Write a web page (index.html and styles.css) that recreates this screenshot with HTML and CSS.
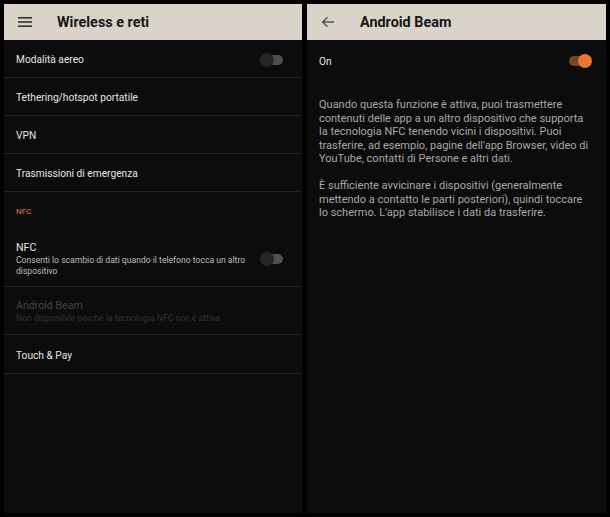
FILE: index.html
```html
<!DOCTYPE html>
<html lang="it">
<head>
<meta charset="utf-8">
<link rel="stylesheet" href="styles.css">
</head>
<body>
<div class="screens">
  <section class="panel">
    <header class="appbar">
      <svg class="icon" width="14" height="10" viewBox="0 0 14 10"><rect x="0" y="0" width="14" height="1.6" fill="#333"/><rect x="0" y="4.2" width="14" height="1.6" fill="#333"/><rect x="0" y="8.4" width="14" height="1.6" fill="#333"/></svg>
      <h1 class="title">Wireless e reti</h1>
    </header>
    <div class="row">
      <span class="label">Modalità aereo</span>
      <span class="toggle"><span class="thumb"></span></span>
    </div>
    <div class="row"><span class="label">Tethering/hotspot portatile</span></div>
    <div class="row"><span class="label">VPN</span></div>
    <div class="row"><span class="label">Trasmissioni di emergenza</span></div>
    <div class="section">NFC</div>
    <div class="row tall">
      <div class="texts">
        <span class="label">NFC</span>
        <span class="sub">Consenti lo scambio di dati quando il telefono tocca un altro dispositivo</span>
      </div>
      <span class="toggle"><span class="thumb"></span></span>
    </div>
    <div class="row mid disabled">
      <div class="texts">
        <span class="label">Android Beam</span>
        <span class="sub">Non disponibile perché la tecnologia NFC non è attiva</span>
      </div>
    </div>
    <div class="row last"><span class="label">Touch &amp; Pay</span></div>
  </section>
  <section class="panel right">
    <header class="appbar">
      <svg class="icon back" width="14" height="12" viewBox="0 0 14 12"><path d="M13 6H2M6.5 1.2L1.6 6l4.9 4.8" fill="none" stroke="#555" stroke-width="1.4"/></svg>
      <h1 class="title">Android Beam</h1>
    </header>
    <div class="row plain">
      <span class="label">On</span>
      <span class="toggle on"><span class="thumb"></span></span>
    </div>
    <div class="desc">
      <p>Quando questa funzione è attiva, puoi trasmettere contenuti delle app a un altro dispositivo che supporta la tecnologia NFC tenendo vicini i dispositivi. Puoi trasferire, ad esempio, pagine dell'app Browser, video di YouTube, contatti di Persone e altri dati.</p>
      <p>È sufficiente avvicinare i dispositivi (generalmente mettendo a contatto le parti posteriori), quindi toccare lo schermo. L'app stabilisce i dati da trasferire.</p>
    </div>
  </section>
</div>
</body>
</html>
```
FILE: styles.css
```css
html, body {
  margin: 0;
  padding: 0;
  background: #000;
}
body {
  font-family: Roboto, "Liberation Sans", sans-serif;
  width: 610px;
  height: 517px;
  overflow: hidden;
}
.screens {
  display: flex;
  gap: 5px;
  padding: 4px;
  height: 509px;
}
.panel {
  width: 298px;
  background: #0c0c0c;
  display: flex;
  flex-direction: column;
}
.panel.right {
  width: 299px;
}
.appbar {
  height: 36px;
  background: #d9d3ca;
  display: flex;
  align-items: center;
  padding-left: 14px;
  flex-shrink: 0;
}
.icon {
  display: block;
}
.title {
  margin: 0 0 0 25px;
  font-size: 14.4px;
  font-weight: 700;
  color: #161616;
}
.row {
  height: 37px;
  border-bottom: 1px solid #242424;
  display: flex;
  align-items: center;
  justify-content: space-between;
  padding: 2px 19px 0 12px;
  box-sizing: border-box;
  height: 38px;
  flex-shrink: 0;
}
.row.tall {
  height: 57px;
}
.row.mid {
  height: 48px;
}
.row.last {
  height: 39px;
}
.row.plain {
  border-bottom: none;
  height: 40px;
  padding-right: 15px;
}
.label {
  font-size: 10.2px;
  color: #e6e6e6;
}
.texts {
  display: flex;
  flex-direction: column;
  width: 240px;
}
.texts .label {
  font-size: 10.6px;
}
.sub {
  font-size: 8.6px;
  line-height: 11px;
  color: #bdbdbd;
  margin-top: 1px;
}
.disabled .label {
  color: #444;
}
.disabled .sub {
  color: #343434;
}
.section {
  height: 38px;
  display: flex;
  align-items: center;
  padding-left: 12px;
  font-size: 8px;
  font-weight: 500;
  color: #c2663a;
  flex-shrink: 0;
}
.toggle {
  position: relative;
  width: 22px;
  height: 10px;
  border-radius: 5px;
  background: #4f4f4f;
  flex-shrink: 0;
}
.toggle .thumb {
  position: absolute;
  left: -1px;
  top: -2px;
  width: 14px;
  height: 14px;
  border-radius: 50%;
  background: #262626;
}
.toggle.on {
  background: #7a4420;
}
.toggle.on .thumb {
  left: 9px;
  background: #e8782d;
}
.desc {
  padding: 18px 14px 0 12px;
  color: #a8a8a8;
  font-size: 11px;
  line-height: 13.5px;
}
.desc p {
  margin: 0 0 13.5px 0;
}
```
